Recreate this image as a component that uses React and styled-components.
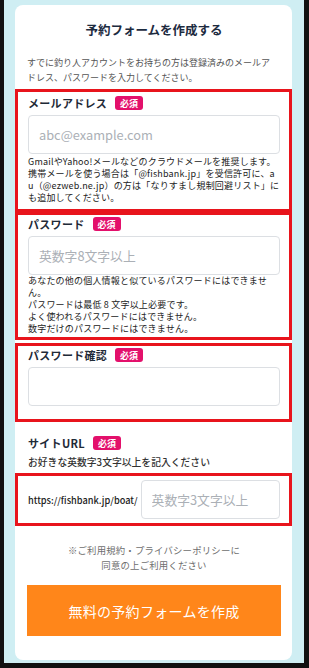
import React from 'react';
import styled, { createGlobalStyle } from 'styled-components';

const GlobalStyle = createGlobalStyle`
  * {
    box-sizing: border-box;
  }
  body {
    margin: 0;
    font-family: "Noto Sans CJK JP", "Noto Sans", sans-serif;
  }
`;

const Frame = styled.div`
  width: 309px;
  height: 668px;
  background: #111;
  padding: 0 5px 5px 4px;
`;

const Backdrop = styled.div`
  height: 100%;
  background: #cfeef3;
  padding: 5px 12px 3px 11px;
`;

const Card = styled.form`
  background: #fff;
  border-radius: 8px;
  padding: 16px 11px 24px 12px;
`;

const Title = styled.h1`
  margin: 0;
  font-size: 12.5px;
  line-height: 18px;
  font-weight: 700;
  text-align: center;
  color: #1d2b3f;
`;

const Lead = styled.p`
  margin: 16px 6px 0 0;
  font-size: 9px;
  line-height: 15px;
  color: #555;
`;

const Field = styled.div`
  margin: ${(p) => p.$top || 0}px -11px 0 -12px;
  border: 3px solid #e8141c;
  padding: ${(p) => p.$pt || 0}px 9px ${(p) => p.$pb || 0}px 10px;
`;

const Section = styled.div`
  margin-top: 13px;
  padding-left: 1px;
`;

const LabelRow = styled.div`
  display: flex;
  align-items: center;
  gap: 8px;
  height: 16px;
`;

const Label = styled.label`
  font-size: 11px;
  letter-spacing: 0.3px;
  font-weight: 700;
  color: #1f2a37;
  line-height: 16px;
`;

const Badge = styled.span`
  display: inline-flex;
  align-items: center;
  justify-content: center;
  width: 28px;
  height: 14px;
  border-radius: 3px;
  background: #e3106b;
  color: #fff;
  font-size: 9px;
  font-weight: 700;
`;

const Input = styled.input`
  display: block;
  width: 100%;
  min-width: 0;
  height: 39px;
  margin-top: ${(p) => (p.$top === undefined ? 4 : p.$top)}px;
  border: 1px solid #dcdfe3;
  border-radius: 4px;
  padding: 0 10px;
  font-family: inherit;
  font-size: 12.8px;
  color: #333;
  outline: none;
  background: #fff;
  &::placeholder {
    color: #abb0b6;
  }
`;

const Help = styled.p`
  margin: ${(p) => p.$top || 0}px 0 0;
  font-size: 9px;
  line-height: 12px;
  letter-spacing: 0.2px;
  color: #222;
`;

const Sub = styled.p`
  margin: 5px 0 0;
  font-size: 9.8px;
  line-height: 12px;
  font-weight: 500;
  color: #333;
`;

const UrlRow = styled.div`
  display: flex;
  align-items: center;
  gap: 3px;
`;

const UrlPrefix = styled.span`
  font-size: 9.2px;
  font-weight: 500;
  color: #222;
  white-space: nowrap;
`;

const Notice = styled.p`
  margin: 17px 0 0;
  font-size: 9.4px;
  line-height: 15px;
  letter-spacing: 0.2px;
  text-align: center;
  color: #6e6e6e;
`;

const Submit = styled.button`
  display: block;
  width: 100%;
  height: 51px;
  margin-top: 12px;
  border: none;
  background: #ff861a;
  color: #fff;
  font-family: inherit;
  font-size: 14px;
  letter-spacing: 0.3px;
  font-weight: 400;
`;

const App = () => {
  return (
    <>
      <GlobalStyle />
      <Frame>
        <Backdrop>
          <Card onSubmit={(e) => e.preventDefault()}>
            <Title>予約フォームを作成する</Title>
            <Lead>
              すでに釣り人アカウントをお持ちの方は登録済みのメールアドレス、パスワードを入力してください。
            </Lead>

            <Field $top={4} $pt={3} $pb={5}>
              <LabelRow>
                <Label>メールアドレス</Label>
                <Badge>必須</Badge>
              </LabelRow>
              <Input type="email" placeholder="abc@example.com" />
              <Help $top={2}>
                GmailやYahoo!メールなどのクラウドメールを推奨します。
                <br />
                携帯メールを使う場合は「@fishbank.jp」を受信許可に、a
                <br />
                u（@ezweb.ne.jp）の方は「なりすまし規制回避リスト」に
                <br />
                も追加してください。
              </Help>
            </Field>

            <Field $pt={1} $pb={2}>
              <LabelRow>
                <Label>パスワード</Label>
                <Badge>必須</Badge>
              </LabelRow>
              <Input type="password" placeholder="英数字8文字以上" />
              <Help>
                あなたの他の個人情報と似ているパスワードにはできませ
                <br />
                ん。
                <br />
                パスワードは最低 8 文字以上必要です。
                <br />
                よく使われるパスワードにはできません。
                <br />
                数字だけのパスワードにはできません。
              </Help>
            </Field>

            <Field $top={3} $pt={1} $pb={13}>
              <LabelRow>
                <Label>パスワード確認</Label>
                <Badge>必須</Badge>
              </LabelRow>
              <Input type="password" />
            </Field>

            <Section>
              <LabelRow>
                <Label>サイトURL</Label>
                <Badge>必須</Badge>
              </LabelRow>
              <Sub>お好きな英数字3文字以上を記入ください</Sub>
            </Section>

            <Field $top={5} $pt={4} $pb={4}>
              <UrlRow>
                <UrlPrefix>https://fishbank.jp/boat/</UrlPrefix>
                <Input $top={0} type="text" placeholder="英数字3文字以上" />
              </UrlRow>
            </Field>

            <Notice>
              ※ご利用規約・プライバシーポリシーに
              <br />
              同意の上ご利用ください
            </Notice>

            <Submit type="submit">無料の予約フォームを作成</Submit>
          </Card>
        </Backdrop>
      </Frame>
    </>
  );
};

export default App;
